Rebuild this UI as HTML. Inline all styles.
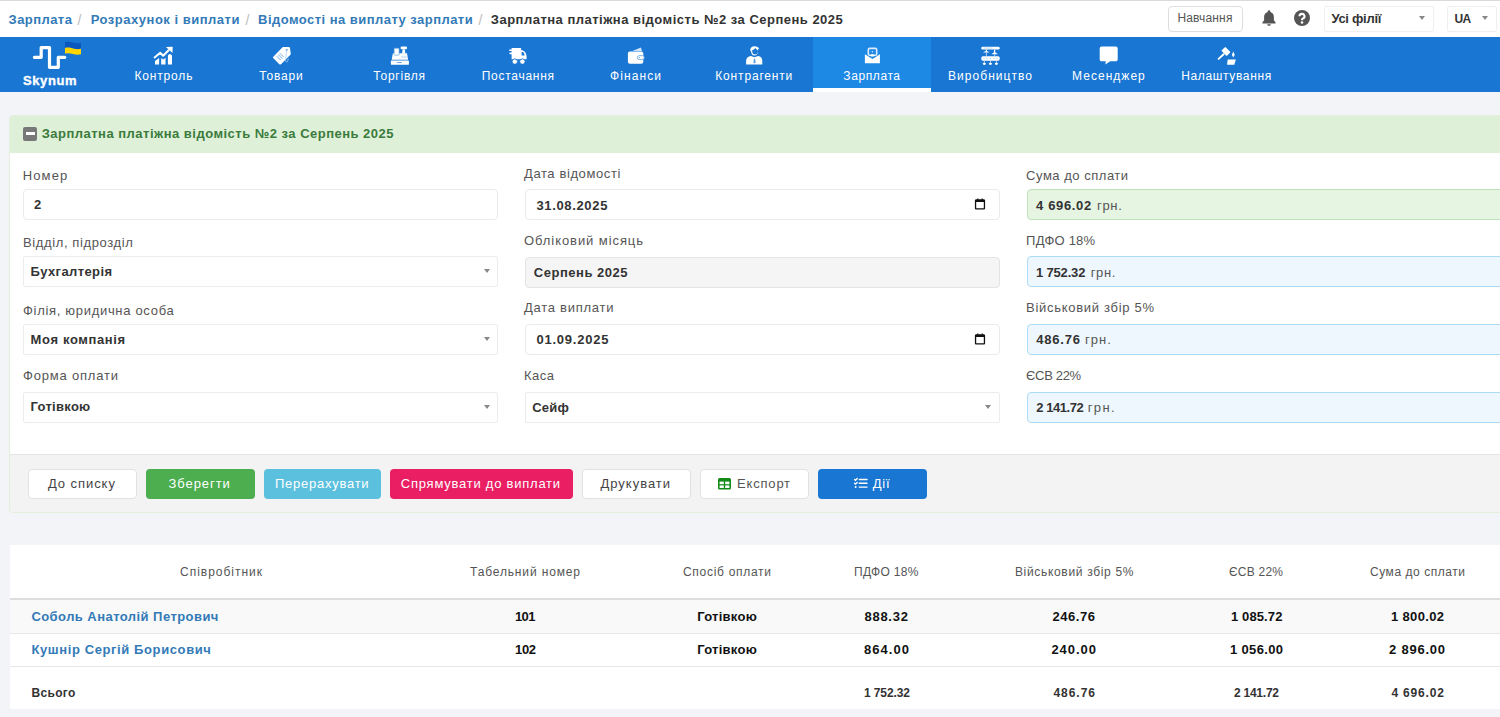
<!DOCTYPE html>
<html><head><meta charset="utf-8">
<style>
*{box-sizing:border-box;margin:0;padding:0}
html,body{width:1500px;height:717px;overflow:hidden}
body{background:#f3f4f8;font-family:"Liberation Sans",sans-serif;color:#333;position:relative}
.b{position:absolute}
.tx{position:absolute;white-space:nowrap}
svg{position:absolute;overflow:visible}
.inp{position:absolute;height:31px;border:1px solid #ebebeb;border-radius:4px;background:#fff}
.sel{position:absolute;height:31px;border:1px solid #ececec;border-radius:2px;background:#fff}
.arr{position:absolute;width:0;height:0;border-left:3.5px solid transparent;border-right:3.5px solid transparent;border-top:4.5px solid #888}
.btn{position:absolute;top:469px;height:30px;border-radius:4px}
.wb{background:#fff;border:1px solid #e2e2e2}
</style></head><body>
<!-- top bar -->
<div class="b" style="left:0;top:0;width:1500px;height:37px;background:#fff;border-top:1px solid #d9dbdb"></div>
<div class="b" style="left:1168px;top:6px;width:75px;height:26px;border:1px solid #dedede;border-radius:4px;background:#fff"></div>
<svg style="left:1260px;top:9px" width="18" height="18" viewBox="0 0 18 18"><path d="M9 1.2c.8 0 1.3.6 1.3 1.3v.5c2.3.6 3.6 2.6 3.6 5v3.2l1.7 2.4v.9H2.4v-.9l1.7-2.4V8c0-2.4 1.3-4.4 3.6-5v-.5C7.7 1.8 8.2 1.2 9 1.2zM7.2 15.2h3.6c0 1-.8 1.6-1.8 1.6s-1.8-.6-1.8-1.6z" fill="#555"/></svg>
<svg style="left:1294px;top:10px" width="16" height="16" viewBox="0 0 16 16"><circle cx="8" cy="8" r="8" fill="#555"/><path d="M5.5 6.3a2.5 2.4 0 1 1 3.6 2.1c-.8.4-1.1.8-1.1 1.6v.3" fill="none" stroke="#fff" stroke-width="2.1"/><circle cx="8" cy="12.6" r="1.25" fill="#fff"/></svg>
<div class="b" style="left:1324px;top:6px;width:110px;height:26px;border:1px solid #efefef;border-radius:2px;background:#fff"></div>
<div class="arr" style="left:1419px;top:16px"></div>
<div class="b" style="left:1447px;top:6px;width:50px;height:26px;border:1px solid #efefef;border-radius:2px;background:#fff"></div>
<div class="arr" style="left:1482px;top:16px"></div>

<!-- nav -->
<div class="b" style="left:0;top:37px;width:1500px;height:55px;background:#1976d2"></div>
<div class="b" style="left:813px;top:37px;width:118px;height:55px;background:#1e88e5;border-bottom:4px solid #fff"></div>
<!-- logo -->
<svg style="left:0;top:37px" width="104" height="55" viewBox="0 37 104 55">
 <path d="M34.4 57.3H41.2V47.6H49.5V67.3H58.3V57.3H64.8" fill="none" stroke="#fff" stroke-width="3.2" stroke-linecap="round" stroke-linejoin="round"/>
 <path d="M65 42.3c2.5-.8 5-.6 8 .3 3 .9 5.5 1 8 .3v5.8c-2.5.7-5 .6-8-.3-3-.9-5.5-1.1-8-.3z" fill="#0a57c0"/>
 <path d="M65 48.1c2.5-.8 5-.6 8 .3 3 .9 5.5 1 8 .3v5.6c-2.5.7-5 .6-8-.3-3-.9-5.5-1.1-8-.3z" fill="#ffd500"/>
</svg>
<!-- nav icons: each svg placed at (x0,40) size 40x28 -->
<svg style="left:145px;top:40px" width="40" height="28" viewBox="0 0 40 28">
 <polyline points="9.6,17.4 15.2,12.7 18.2,15.7 23.6,10.3" fill="none" stroke="#fff" stroke-width="2.0" stroke-linecap="round" stroke-linejoin="round"/>
 <path d="M20.9 7.1L27.7 6.8 27.5 12.9z" fill="#fff"/>
 <path d="M10 24.6V21l4.1-3v6.6z" fill="#fff"/>
 <path d="M16.2 24.6V18l2 1.6 2.3-1.8v6.8z" fill="#fff"/>
 <path d="M22.9 24.6V15.8c0-.9.9-1.5 2-1.5s2.1.6 2.1 1.5v8.8z" fill="#fff"/>
</svg>
<svg style="left:262px;top:40px" width="40" height="28" viewBox="0 0 40 28">
 <path d="M11.3 16.7L20.5 7.3c.3-.3.7-.4 1.1-.4l5.2.2c.6 0 1.1.5 1.2 1.1l.8 5.5c0 .4-.1.8-.4 1.1l-9.4 9.4c-.5.5-1.2.5-1.7 0l-5.9-5.9c-.5-.5-.5-1.2-.1-1.6z" fill="#fff"/>
 <g stroke="#5d9fe0" stroke-width="0.9"><line x1="14.8" y1="16.2" x2="18.8" y2="20.2"/><line x1="16.3" y1="14.7" x2="20.3" y2="18.7"/><line x1="17.8" y1="13.2" x2="21.8" y2="17.2"/></g>
 <circle cx="24.6" cy="10" r="1" fill="#5d9fe0"/>
 <path d="M24.6 10L23.5 20.5c-.2 1.6 1.8 2 2.2.5l.6-2.7" fill="none" stroke="#a8cdf0" stroke-width="0.8"/>
</svg>
<svg style="left:380px;top:40px" width="40" height="28" viewBox="0 0 40 28">
 <rect x="10.9" y="20.6" width="18" height="4.2" rx="0.6" fill="#fff"/>
 <rect x="16.8" y="22" width="5" height="0.9" fill="#5d9fe0"/>
 <path d="M12.9 13.3H27L28.1 19.8H11.7z" fill="#fff"/>
 <rect x="14.1" y="8.2" width="5" height="7" rx="0.7" fill="#fff" stroke="#5d9fe0" stroke-width="0.6"/>
 <rect x="20.6" y="6.6" width="6.4" height="2.6" rx="1" fill="#fff"/>
 <path d="M22.6 9.2h2.2l.6 4.2h-3.4z" fill="#fff"/>
 <g fill="#8dbdea"><rect x="21.5" y="16.5" width="1.2" height="1"/><rect x="23.4" y="16.5" width="1.2" height="1"/><rect x="25.2" y="16.5" width="1.2" height="1"/></g>
</svg>
<svg style="left:498px;top:40px" width="40" height="28" viewBox="0 0 40 28">
 <path d="M13.6 7.9h9.5v2.1c3.5.3 5.5 3.5 5.5 6.8v2.5h-15z" fill="#fff"/>
 <path d="M23.6 12.1h1c1 .2 1.8 1.4 2 3.5h-3z" fill="#1976d2"/>
 <g stroke="#fff" stroke-width="1.6" stroke-linecap="round"><line x1="11.8" y1="10.2" x2="15" y2="10.2"/><line x1="12.2" y1="13.4" x2="16" y2="13.4"/></g>
 <circle cx="16.8" cy="21.6" r="2.7" fill="#fff" stroke="#1976d2" stroke-width="0.9"/>
 <circle cx="24.4" cy="21.6" r="2.7" fill="#fff" stroke="#1976d2" stroke-width="0.9"/>
</svg>
<svg style="left:615px;top:40px" width="40" height="28" viewBox="0 0 40 28">
 <path d="M17.5 11L25.8 7.6l1.3 3.4z" fill="#cfe3f7"/>
 <rect x="12.9" y="11.4" width="15.4" height="12.4" rx="2" fill="#fff"/>
 <rect x="22.3" y="15.6" width="7" height="4" rx="2" fill="#fff" stroke="#5d9fe0" stroke-width="0.8"/>
 <circle cx="24.5" cy="17.6" r="0.6" fill="#5d9fe0"/>
</svg>
<svg style="left:734px;top:40px" width="40" height="28" viewBox="0 0 40 28">
 <path d="M16.2 10.5c0-3 2-4.3 4.3-4.3 2.4 0 4.4 1.2 4.4 2.6-.5.5-1 .7-1 1.5v1.5c0 2.2-1.4 3.7-3.4 3.7s-3.3-1.5-3.3-3.7z" fill="#fff"/>
 <path d="M17.6 10.5c1.5-.5 3-1.5 3.8-2.6.5 1 1.6 1.9 2.5 2.3v1.3c0 1.9-1.1 3-2.8 3s-2.8-1.1-2.8-3z" fill="#1976d2"/>
 <path d="M12.1 24.6v-3.8c0-2.7 2-4.3 4.8-4.8l3.6 1.3 3.6-1.3c2.8.5 4.2 2.1 4.2 4.8v3.8z" fill="#fff"/>
 <path d="M20 18.8h1l.7 3.8-1.2 1-1.2-1z" fill="#5d9fe0"/>
</svg>
<svg style="left:852px;top:40px" width="40" height="28" viewBox="0 0 40 28">
 <rect x="16.3" y="8.4" width="8.4" height="6.8" rx="1.3" fill="none" stroke="#dcebfa" stroke-width="1.6"/>
 <circle cx="20.4" cy="11.7" r="0.8" fill="#cfe3f7"/>
 <path d="M12.9 14.2l7.6 4.8 7.4-4.8v9H12.9z" fill="#fff"/>
 <ellipse cx="20.4" cy="15.4" rx="2" ry="1.2" fill="#fff"/>
</svg>
<svg style="left:970px;top:40px" width="40" height="28" viewBox="0 0 40 28">
 <rect x="11.3" y="6.8" width="18.4" height="2.6" rx="1.2" fill="#fff"/>
 <rect x="13.5" y="7.7" width="9" height="0.7" fill="#a8cdf0"/>
 <path d="M15.8 9.4h1.2v1.6l2.6 1.5H12.9l2.9-1.5z" fill="#fff"/>
 <path d="M24 9.4h1.2v2.8l2.8 2H21.4l2.6-2z" fill="#fff"/>
 <rect x="11.3" y="16.2" width="18.4" height="4.5" rx="1.6" fill="#fff"/>
 <g fill="#a8cdf0"><rect x="13.4" y="18" width="1.2" height="1"/><rect x="16.2" y="18" width="1.2" height="1"/><rect x="19.9" y="18" width="1.2" height="1"/><rect x="23.4" y="18" width="1.2" height="1"/><rect x="26.3" y="18" width="1.2" height="1"/></g>
 <g stroke="#d0e4f8" stroke-width="0.8"><line x1="16.4" y1="12.5" x2="16.4" y2="16.2"/><line x1="24.7" y1="14.2" x2="24.7" y2="16.2"/><line x1="14.3" y1="20.7" x2="14.3" y2="23"/><line x1="20.4" y1="20.7" x2="20.4" y2="23"/><line x1="26.4" y1="20.7" x2="26.4" y2="23"/></g>
 <g fill="#fff"><ellipse cx="14.3" cy="23.8" rx="1.6" ry="1.1"/><ellipse cx="20.4" cy="23.8" rx="1.6" ry="1.1"/><ellipse cx="26.4" cy="23.8" rx="1.6" ry="1.1"/></g>
</svg>
<svg style="left:1088px;top:40px" width="40" height="28" viewBox="0 0 40 28">
 <path d="M13.6 6.6h14.2c1 0 1.9.9 1.9 1.9v10.9c0 1-.9 1.9-1.9 1.9h-5.6l-4.8 3.3.3-3.3h-4.1c-1 0-1.9-.9-1.9-1.9V8.5c0-1 .9-1.9 1.9-1.9z" fill="#fff"/>
</svg>
<svg style="left:1206px;top:40px" width="40" height="28" viewBox="0 0 40 28">
 <rect x="16.2" y="8.6" width="7.5" height="5.6" rx="0.9" transform="rotate(45 19.95 11.4)" fill="#fff"/>
 <line x1="17.6" y1="14.2" x2="12.6" y2="18.9" stroke="#fff" stroke-width="1.9" stroke-linecap="round"/>
 <path d="M21.7 19.6h8.2l-1.6 5.2h-6.6c-.4 0-.6-.2-.6-.6z" fill="#fff"/>
 <path d="M27.3 11.6l1.4 3.2-1.4 2.8-1.4-2.8z" fill="#fff"/>
</svg>

<!-- panel -->
<div class="b" style="left:9px;top:115px;width:1500px;height:398px;background:#fff;border:1px solid #e3efdc;border-radius:4px 0 0 4px;overflow:hidden">
  <div class="b" style="left:0;top:0;width:1500px;height:37px;background:#dff0d8"></div>
  <div class="b" style="left:0;top:338px;width:1500px;height:60px;background:#f3f3f3;border-top:1px solid #e4e4e4"></div>
</div>
<div class="b" style="left:23px;top:127px;width:14px;height:14px;background:#787878;border-radius:2px"></div>
<div class="b" style="left:25.5px;top:132px;width:9px;height:3px;background:#fff"></div>

<!-- inputs -->
<div class="inp" style="left:23px;top:189px;width:474.5px;height:31px"></div>
<div class="sel" style="left:23px;top:256px;width:474.5px;height:31px"></div>
<div class="arr" style="left:483.5px;top:269px"></div>
<div class="sel" style="left:23px;top:324px;width:474.5px;height:31px"></div>
<div class="arr" style="left:483.5px;top:337px"></div>
<div class="sel" style="left:23px;top:391.5px;width:474.5px;height:31px"></div>
<div class="arr" style="left:483.5px;top:404.5px"></div>

<div class="inp" style="left:525px;top:189px;width:474.5px;height:31px"></div>
<svg style="left:974px;top:198px" width="12" height="12" viewBox="0 0 12 12"><path d="M2.3 1.2h.9V.4h1.2v.8h3.2V.4h1.2v.8h.9c.8 0 1.4.6 1.4 1.4v7.6c0 .8-.6 1.4-1.4 1.4H2.3c-.8 0-1.4-.6-1.4-1.4V2.6c0-.8.6-1.4 1.4-1.4zM2.2 4.1v5.9c0 .2.1.3.3.3h7c.2 0 .3-.1.3-.3V4.1z" fill="#111"/></svg>
<div class="inp" style="left:525px;top:256.5px;width:474.5px;height:31px;background:#f5f5f5;border-color:#e4e4e4"></div>
<div class="inp" style="left:525px;top:324px;width:474.5px;height:31px"></div>
<svg style="left:974px;top:333px" width="12" height="12" viewBox="0 0 12 12"><path d="M2.3 1.2h.9V.4h1.2v.8h3.2V.4h1.2v.8h.9c.8 0 1.4.6 1.4 1.4v7.6c0 .8-.6 1.4-1.4 1.4H2.3c-.8 0-1.4-.6-1.4-1.4V2.6c0-.8.6-1.4 1.4-1.4zM2.2 4.1v5.9c0 .2.1.3.3.3h7c.2 0 .3-.1.3-.3V4.1z" fill="#111"/></svg>
<div class="sel" style="left:525px;top:391.5px;width:474.5px;height:31px"></div>
<div class="arr" style="left:985px;top:404.5px"></div>

<div class="inp" style="left:1027px;top:189px;width:500px;height:31px;background:#e6f4e2;border-color:#c0e2ba"></div>
<div class="inp" style="left:1027px;top:256px;width:500px;height:31px;background:#eef7fd;border-color:#acdcf5"></div>
<div class="inp" style="left:1027px;top:324px;width:500px;height:31px;background:#eef7fd;border-color:#acdcf5"></div>
<div class="inp" style="left:1027px;top:391.5px;width:500px;height:31px;background:#eef7fd;border-color:#acdcf5"></div>

<!-- buttons -->
<div class="btn wb" style="left:28px;width:109px"></div>
<div class="btn" style="left:146px;width:109px;background:#4cae4f"></div>
<div class="btn" style="left:264px;width:117px;background:#5bc0de"></div>
<div class="btn" style="left:390px;width:183px;background:#e91e63"></div>
<div class="btn wb" style="left:581.5px;width:109px"></div>
<div class="btn wb" style="left:700px;width:109px"></div>
<svg style="left:718px;top:477.5px" width="13" height="12" viewBox="0 0 13 12"><rect x="0" y="0" width="13" height="11.5" rx="1.6" fill="#138a17"/><g fill="#fff"><rect x="1.6" y="3.6" width="4.2" height="2.6"/><rect x="7.2" y="3.6" width="4.2" height="2.6"/><rect x="1.6" y="7.4" width="4.2" height="2.6"/><rect x="7.2" y="7.4" width="4.2" height="2.6"/></g></svg>
<div class="btn" style="left:818px;width:109px;background:#1976d2"></div>
<svg style="left:854px;top:478px" width="14" height="11" viewBox="0 0 14 11"><g stroke="#fff" stroke-width="1.4" stroke-linecap="round" fill="none"><path d="M.6 1.4l.9.9 1.7-1.7"/><path d="M.6 5.2l.9.9 1.7-1.7"/><line x1="5.2" y1="1.5" x2="13" y2="1.5"/><line x1="5.2" y1="5.3" x2="13" y2="5.3"/><line x1="5.2" y1="9.1" x2="13" y2="9.1"/></g><circle cx="1.6" cy="9.1" r="1" fill="#fff"/></svg>

<!-- table card -->
<div class="b" style="left:10px;top:545px;width:1500px;height:164px;background:#fff"></div>
<div class="b" style="left:10px;top:598px;width:1500px;height:2px;background:#dddddd"></div>
<div class="b" style="left:10px;top:600px;width:1500px;height:33px;background:#f9f9f9"></div>
<div class="b" style="left:10px;top:633px;width:1500px;height:1px;background:#e7e7e7"></div>
<div class="b" style="left:10px;top:665.5px;width:1500px;height:1px;background:#e7e7e7"></div>

<div class="tx" style="left:8.60px;top:13.00px;font-size:13px;line-height:13px;font-weight:700;color:#337ab7;letter-spacing:0.433px;">Зарплата</div>
<div class="tx" style="left:77.40px;top:12.65px;font-size:14px;line-height:14px;font-weight:400;color:#bdbdbd;letter-spacing:0.000px;">/</div>
<div class="tx" style="left:90.70px;top:13.00px;font-size:13px;line-height:13px;font-weight:700;color:#337ab7;letter-spacing:0.501px;">Розрахунок і виплати</div>
<div class="tx" style="left:245.40px;top:12.65px;font-size:14px;line-height:14px;font-weight:400;color:#bdbdbd;letter-spacing:0.000px;">/</div>
<div class="tx" style="left:258.10px;top:13.00px;font-size:13px;line-height:13px;font-weight:700;color:#337ab7;letter-spacing:0.458px;">Відомості на виплату зарплати</div>
<div class="tx" style="left:478.40px;top:12.65px;font-size:14px;line-height:14px;font-weight:400;color:#bdbdbd;letter-spacing:0.000px;">/</div>
<div class="tx" style="left:490.80px;top:13.00px;font-size:13px;line-height:13px;font-weight:700;color:#333;letter-spacing:0.489px;">Зарплатна платіжна відомість №2 за Серпень 2025</div>
<div class="tx" style="left:1177.40px;top:12.04px;font-size:12px;line-height:12px;font-weight:400;color:#555;letter-spacing:0.163px;">Навчання</div>
<div class="tx" style="left:1331.40px;top:12.40px;font-size:13px;line-height:13px;font-weight:700;color:#333;letter-spacing:-0.281px;">Усі філії</div>
<div class="tx" style="left:1454.40px;top:13.04px;font-size:12px;line-height:12px;font-weight:700;color:#333;letter-spacing:-0.644px;">UA</div>
<div class="tx" style="left:134.40px;top:69.54px;font-size:12px;line-height:12px;font-weight:400;color:#fff;letter-spacing:0.839px;">Контроль</div>
<div class="tx" style="left:259.30px;top:69.54px;font-size:12px;line-height:12px;font-weight:400;color:#fff;letter-spacing:0.808px;">Товари</div>
<div class="tx" style="left:373.35px;top:69.54px;font-size:12px;line-height:12px;font-weight:400;color:#fff;letter-spacing:0.758px;">Торгівля</div>
<div class="tx" style="left:481.75px;top:69.54px;font-size:12px;line-height:12px;font-weight:400;color:#fff;letter-spacing:0.728px;">Постачання</div>
<div class="tx" style="left:610.00px;top:69.54px;font-size:12px;line-height:12px;font-weight:400;color:#fff;letter-spacing:1.096px;">Фінанси</div>
<div class="tx" style="left:715.30px;top:69.54px;font-size:12px;line-height:12px;font-weight:400;color:#fff;letter-spacing:0.825px;">Контрагенти</div>
<div class="tx" style="left:843.35px;top:69.54px;font-size:12px;line-height:12px;font-weight:400;color:#fff;letter-spacing:0.593px;">Зарплата</div>
<div class="tx" style="left:948.00px;top:69.54px;font-size:12px;line-height:12px;font-weight:400;color:#fff;letter-spacing:1.045px;">Виробництво</div>
<div class="tx" style="left:1072.00px;top:69.54px;font-size:12px;line-height:12px;font-weight:400;color:#fff;letter-spacing:1.039px;">Месенджер</div>
<div class="tx" style="left:1181.20px;top:69.54px;font-size:12px;line-height:12px;font-weight:400;color:#fff;letter-spacing:0.641px;">Налаштування</div>
<div class="tx" style="left:23.00px;top:73.60px;font-size:13px;line-height:13px;font-weight:700;color:#fff;letter-spacing:0.604px;-webkit-text-stroke:0.35px #fff;">Skynum</div>
<div class="tx" style="left:41.70px;top:127.00px;font-size:13px;line-height:13px;font-weight:700;color:#3a7b3c;letter-spacing:0.485px;">Зарплатна платіжна відомість №2 за Серпень 2025</div>
<div class="tx" style="left:22.80px;top:168.50px;font-size:13px;line-height:13px;font-weight:400;color:#555;letter-spacing:1.096px;">Номер</div>
<div class="tx" style="left:23.00px;top:236.30px;font-size:13px;line-height:13px;font-weight:400;color:#555;letter-spacing:0.612px;">Відділ, підрозділ</div>
<div class="tx" style="left:23.00px;top:303.80px;font-size:13px;line-height:13px;font-weight:400;color:#555;letter-spacing:0.691px;">Філія, юридична особа</div>
<div class="tx" style="left:23.00px;top:369.40px;font-size:13px;line-height:13px;font-weight:400;color:#555;letter-spacing:0.805px;">Форма оплати</div>
<div class="tx" style="left:524.00px;top:166.60px;font-size:13px;line-height:13px;font-weight:400;color:#555;letter-spacing:0.605px;">Дата відомості</div>
<div class="tx" style="left:524.00px;top:234.40px;font-size:13px;line-height:13px;font-weight:400;color:#555;letter-spacing:0.924px;">Обліковий місяць</div>
<div class="tx" style="left:524.00px;top:301.40px;font-size:13px;line-height:13px;font-weight:400;color:#555;letter-spacing:0.731px;">Дата виплати</div>
<div class="tx" style="left:524.00px;top:369.20px;font-size:13px;line-height:13px;font-weight:400;color:#555;letter-spacing:0.484px;">Каса</div>
<div class="tx" style="left:1026.10px;top:168.50px;font-size:13px;line-height:13px;font-weight:400;color:#555;letter-spacing:0.520px;">Сума до сплати</div>
<div class="tx" style="left:1026.10px;top:234.40px;font-size:13px;line-height:13px;font-weight:400;color:#555;letter-spacing:0.214px;">ПДФО 18%</div>
<div class="tx" style="left:1026.10px;top:301.40px;font-size:13px;line-height:13px;font-weight:400;color:#555;letter-spacing:0.707px;">Військовий збір 5%</div>
<div class="tx" style="left:1026.10px;top:369.20px;font-size:13px;line-height:13px;font-weight:400;color:#555;letter-spacing:-0.341px;">ЄСВ 22%</div>
<div class="tx" style="left:34.00px;top:198.00px;font-size:13px;line-height:13px;font-weight:700;color:#333;letter-spacing:0.000px;">2</div>
<div class="tx" style="left:30.60px;top:264.80px;font-size:13px;line-height:13px;font-weight:700;color:#333;letter-spacing:0.396px;">Бухгалтерія</div>
<div class="tx" style="left:30.60px;top:333.00px;font-size:13px;line-height:13px;font-weight:700;color:#333;letter-spacing:0.631px;">Моя компанія</div>
<div class="tx" style="left:30.60px;top:400.30px;font-size:13px;line-height:13px;font-weight:700;color:#333;letter-spacing:0.273px;">Готівкою</div>
<div class="tx" style="left:536.40px;top:198.60px;font-size:13px;line-height:13px;font-weight:700;color:#333;letter-spacing:0.658px;">31.08.2025</div>
<div class="tx" style="left:533.80px;top:266.00px;font-size:13px;line-height:13px;font-weight:700;color:#333;letter-spacing:0.515px;">Серпень 2025</div>
<div class="tx" style="left:536.40px;top:333.30px;font-size:13px;line-height:13px;font-weight:700;color:#333;letter-spacing:0.769px;">01.09.2025</div>
<div class="tx" style="left:532.20px;top:400.50px;font-size:13px;line-height:13px;font-weight:700;color:#333;letter-spacing:0.233px;">Сейф</div>
<div class="tx" style="left:1036.00px;top:198.60px;font-size:13px;line-height:13px;font-weight:700;color:#333;letter-spacing:0.656px;">4 696.02</div>
<div class="tx" style="left:1036.00px;top:265.80px;font-size:13px;line-height:13px;font-weight:700;color:#333;letter-spacing:-0.173px;">1 752.32</div>
<div class="tx" style="left:1036.20px;top:333.20px;font-size:13px;line-height:13px;font-weight:700;color:#333;letter-spacing:0.807px;">486.76</div>
<div class="tx" style="left:1036.20px;top:400.50px;font-size:13px;line-height:13px;font-weight:700;color:#333;letter-spacing:-0.444px;">2 141.72</div>
<div class="tx" style="left:1096.90px;top:198.60px;font-size:13px;line-height:13px;font-weight:400;color:#555;letter-spacing:0.745px;">грн.</div>
<div class="tx" style="left:1090.70px;top:265.80px;font-size:13px;line-height:13px;font-weight:400;color:#555;letter-spacing:0.645px;">грн.</div>
<div class="tx" style="left:1085.00px;top:333.20px;font-size:13px;line-height:13px;font-weight:400;color:#555;letter-spacing:1.011px;">грн.</div>
<div class="tx" style="left:1087.80px;top:400.50px;font-size:13px;line-height:13px;font-weight:400;color:#555;letter-spacing:1.311px;">грн.</div>
<div class="tx" style="left:47.90px;top:477.00px;font-size:13px;line-height:13px;font-weight:400;color:#444;letter-spacing:0.945px;">До списку</div>
<div class="tx" style="left:168.40px;top:477.00px;font-size:13px;line-height:13px;font-weight:400;color:#fff;letter-spacing:0.955px;">Зберегти</div>
<div class="tx" style="left:275.00px;top:477.00px;font-size:13px;line-height:13px;font-weight:400;color:#fff;letter-spacing:0.743px;">Перерахувати</div>
<div class="tx" style="left:400.80px;top:477.00px;font-size:13px;line-height:13px;font-weight:400;color:#fff;letter-spacing:0.762px;">Спрямувати до виплати</div>
<div class="tx" style="left:600.40px;top:477.00px;font-size:13px;line-height:13px;font-weight:400;color:#444;letter-spacing:1.005px;">Друкувати</div>
<div class="tx" style="left:737.10px;top:477.00px;font-size:13px;line-height:13px;font-weight:400;color:#555;letter-spacing:0.802px;">Експорт</div>
<div class="tx" style="left:872.70px;top:477.00px;font-size:13px;line-height:13px;font-weight:400;color:#fff;letter-spacing:0.844px;">Дії</div>
<div class="tx" style="left:180.00px;top:565.84px;font-size:12px;line-height:12px;font-weight:400;color:#555;letter-spacing:0.984px;">Співробітник</div>
<div class="tx" style="left:470.00px;top:565.84px;font-size:12px;line-height:12px;font-weight:400;color:#555;letter-spacing:0.857px;">Табельний номер</div>
<div class="tx" style="left:683.00px;top:565.84px;font-size:12px;line-height:12px;font-weight:400;color:#555;letter-spacing:0.708px;">Спосіб оплати</div>
<div class="tx" style="left:853.95px;top:565.84px;font-size:12px;line-height:12px;font-weight:400;color:#555;letter-spacing:0.315px;">ПДФО 18%</div>
<div class="tx" style="left:1014.95px;top:565.84px;font-size:12px;line-height:12px;font-weight:400;color:#555;letter-spacing:0.673px;">Військовий збір 5%</div>
<div class="tx" style="left:1229.00px;top:565.84px;font-size:12px;line-height:12px;font-weight:400;color:#555;letter-spacing:0.224px;">ЄСВ 22%</div>
<div class="tx" style="left:1370.00px;top:565.84px;font-size:12px;line-height:12px;font-weight:400;color:#555;letter-spacing:0.544px;">Сума до сплати</div>
<div class="tx" style="left:31.40px;top:609.60px;font-size:13px;line-height:13px;font-weight:700;color:#337ab7;letter-spacing:0.444px;">Соболь Анатолій Петрович</div>
<div class="tx" style="left:31.40px;top:643.00px;font-size:13px;line-height:13px;font-weight:700;color:#337ab7;letter-spacing:0.608px;">Кушнір Сергій Борисович</div>
<div class="tx" style="left:514.95px;top:609.60px;font-size:13px;line-height:13px;font-weight:700;color:#111;letter-spacing:-0.602px;">101</div>
<div class="tx" style="left:697.20px;top:609.60px;font-size:13px;line-height:13px;font-weight:700;color:#111;letter-spacing:0.273px;">Готівкою</div>
<div class="tx" style="left:864.45px;top:609.60px;font-size:13px;line-height:13px;font-weight:700;color:#111;letter-spacing:0.747px;">888.32</div>
<div class="tx" style="left:1052.45px;top:609.60px;font-size:13px;line-height:13px;font-weight:700;color:#111;letter-spacing:0.547px;">246.76</div>
<div class="tx" style="left:1230.95px;top:609.60px;font-size:13px;line-height:13px;font-weight:700;color:#111;letter-spacing:0.127px;">1 085.72</div>
<div class="tx" style="left:1391.00px;top:609.60px;font-size:13px;line-height:13px;font-weight:700;color:#111;letter-spacing:0.342px;">1 800.02</div>
<div class="tx" style="left:515.00px;top:643.00px;font-size:13px;line-height:13px;font-weight:700;color:#111;letter-spacing:-0.352px;">102</div>
<div class="tx" style="left:697.20px;top:643.00px;font-size:13px;line-height:13px;font-weight:700;color:#111;letter-spacing:0.273px;">Готівкою</div>
<div class="tx" style="left:864.00px;top:643.00px;font-size:13px;line-height:13px;font-weight:700;color:#111;letter-spacing:1.047px;">864.00</div>
<div class="tx" style="left:1051.45px;top:643.00px;font-size:13px;line-height:13px;font-weight:700;color:#111;letter-spacing:0.947px;">240.00</div>
<div class="tx" style="left:1230.00px;top:643.00px;font-size:13px;line-height:13px;font-weight:700;color:#111;letter-spacing:0.342px;">1 056.00</div>
<div class="tx" style="left:1389.00px;top:643.00px;font-size:13px;line-height:13px;font-weight:700;color:#111;letter-spacing:0.770px;">2 896.00</div>
<div class="tx" style="left:31.40px;top:686.84px;font-size:12px;line-height:12px;font-weight:700;color:#333;letter-spacing:0.356px;">Всього</div>
<div class="tx" style="left:864.00px;top:686.84px;font-size:12px;line-height:12px;font-weight:700;color:#333;letter-spacing:-0.103px;">1 752.32</div>
<div class="tx" style="left:1053.45px;top:686.84px;font-size:12px;line-height:12px;font-weight:700;color:#333;letter-spacing:0.959px;">486.76</div>
<div class="tx" style="left:1234.00px;top:686.84px;font-size:12px;line-height:12px;font-weight:700;color:#333;letter-spacing:-0.246px;">2 141.72</div>
<div class="tx" style="left:1391.45px;top:686.84px;font-size:12px;line-height:12px;font-weight:700;color:#333;letter-spacing:0.826px;">4 696.02</div>
</body></html>
